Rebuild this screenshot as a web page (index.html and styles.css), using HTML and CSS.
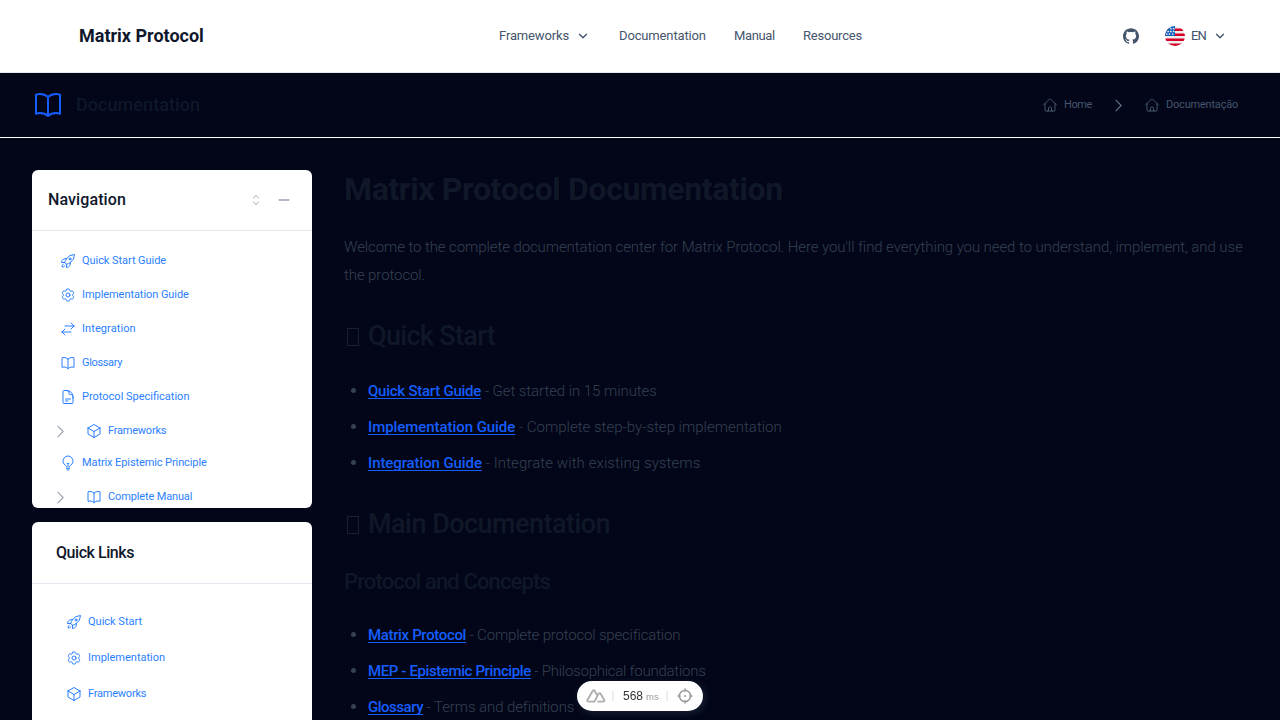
FILE: index.html
```html
<!DOCTYPE html>
<html lang="en">
<head>
<meta charset="utf-8">
<title>Matrix Protocol Documentation</title>
<link rel="stylesheet" href="styles.css">
</head>
<body>
<svg class="sprite" aria-hidden="true">
  <symbol id="book" viewBox="0 0 24 24"><path d="M12 6.042A8.967 8.967 0 0 0 6 3.75c-1.052 0-2.062.18-3 .512v14.25A8.987 8.987 0 0 1 6 18c2.305 0 4.408.867 6 2.292m0-14.25a8.966 8.966 0 0 1 6-2.292c1.052 0 2.062.18 3 .512v14.25A8.987 8.987 0 0 0 18 18a8.967 8.967 0 0 0-6 2.292m0-14.25v14.25"/></symbol>
  <symbol id="home" viewBox="0 0 24 24"><path d="m2.25 12 8.954-8.955a1.126 1.126 0 0 1 1.591 0L21.75 12M4.5 9.75v10.125c0 .621.504 1.125 1.125 1.125H9.75v-4.875c0-.621.504-1.125 1.125-1.125h2.25c.621 0 1.125.504 1.125 1.125V21h4.125c.621 0 1.125-.504 1.125-1.125V9.75M8.25 21h8.25"/></symbol>
  <symbol id="right" viewBox="0 0 24 24"><path d="m8.25 4.5 7.5 7.5-7.5 7.5"/></symbol>
  <symbol id="down" viewBox="0 0 24 24"><path d="m6 9 6 6 6-6"/></symbol>
  <symbol id="updown" viewBox="0 0 24 24"><path d="M8.25 15 12 18.75 15.75 15m-7.5-6L12 5.25 15.75 9"/></symbol>
  <symbol id="minus" viewBox="0 0 24 24"><path d="M5 12h14"/></symbol>
  <symbol id="rocket" viewBox="0 0 24 24"><path d="M15.59 14.37a6 6 0 0 1-5.84 7.38v-4.8m5.84-2.58a14.98 14.98 0 0 0 6.16-12.12A14.98 14.98 0 0 0 9.631 8.41m5.96 5.96a14.926 14.926 0 0 1-5.841 2.58m-.119-8.54a6 6 0 0 0-7.381 5.84h4.8m2.581-5.84a14.927 14.927 0 0 0-2.58 5.84m2.699 2.7c-.103.021-.207.041-.311.06a15.09 15.09 0 0 1-2.448-2.448 14.9 14.9 0 0 1 .06-.312m-2.24 2.39a4.493 4.493 0 0 0-1.757 4.306 4.493 4.493 0 0 0 4.306-1.758M16.5 9a1.5 1.5 0 1 1-3 0 1.5 1.5 0 0 1 3 0Z"/></symbol>
  <symbol id="cog" viewBox="0 0 24 24"><path d="M9.594 3.94c.09-.542.56-.94 1.11-.94h2.593c.55 0 1.02.398 1.11.94l.213 1.281c.063.374.313.686.645.87.074.04.147.083.22.127.325.196.72.257 1.075.124l1.217-.456a1.125 1.125 0 0 1 1.37.49l1.296 2.247a1.125 1.125 0 0 1-.26 1.431l-1.003.827c-.293.241-.438.613-.43.992a7.723 7.723 0 0 1 0 .255c-.008.378.137.75.43.991l1.004.827c.424.35.534.955.26 1.43l-1.298 2.247a1.125 1.125 0 0 1-1.369.491l-1.217-.456c-.355-.133-.75-.072-1.076.124a6.47 6.47 0 0 1-.22.128c-.331.183-.581.495-.644.869l-.213 1.281c-.09.543-.56.94-1.11.94h-2.594c-.55 0-1.019-.398-1.11-.94l-.213-1.281c-.062-.374-.312-.686-.644-.87a6.52 6.52 0 0 1-.22-.127c-.325-.196-.72-.257-1.076-.124l-1.217.456a1.125 1.125 0 0 1-1.369-.49l-1.297-2.247a1.125 1.125 0 0 1 .26-1.431l1.004-.827c.292-.24.437-.613.43-.991a6.932 6.932 0 0 1 0-.255c.007-.38-.138-.751-.43-.992l-1.004-.827a1.125 1.125 0 0 1-.26-1.43l1.297-2.247a1.125 1.125 0 0 1 1.37-.491l1.216.456c.356.133.751.072 1.076-.124.072-.044.146-.086.22-.128.332-.183.582-.495.644-.869l.214-1.28ZM15 12a3 3 0 1 1-6 0 3 3 0 0 1 6 0Z"/></symbol>
  <symbol id="arrows" viewBox="0 0 24 24"><path d="M7.5 21 3 16.5m0 0L7.5 12M3 16.5h13.5m0-13.5L21 7.5m0 0L16.5 12M21 7.5H7.5"/></symbol>
  <symbol id="doc" viewBox="0 0 24 24"><path d="M19.5 14.25v-2.625a3.375 3.375 0 0 0-3.375-3.375h-1.5A1.125 1.125 0 0 1 13.5 7.125v-1.5a3.375 3.375 0 0 0-3.375-3.375H8.25m0 12.75h7.5m-7.5 3H12M10.5 2.25H5.625c-.621 0-1.125.504-1.125 1.125v17.25c0 .621.504 1.125 1.125 1.125h12.75c.621 0 1.125-.504 1.125-1.125V11.25a9 9 0 0 0-9-9Z"/></symbol>
  <symbol id="cube" viewBox="0 0 24 24"><path d="m21 7.5-9-5.25L3 7.5m18 0-9 5.25m9-5.25v9l-9 5.25M3 7.5l9 5.25M3 7.5v9l9 5.25m0-9v9"/></symbol>
  <symbol id="bulb" viewBox="0 0 24 24"><path d="M12 18v-5.25m0 0a6.01 6.01 0 0 0 1.5-.189m-1.5.189a6.01 6.01 0 0 1-1.5-.189m3.75 7.478a12.06 12.06 0 0 1-4.5 0m3.75 2.383a14.406 14.406 0 0 1-3 0M14.25 18v-.192c0-.983.658-1.823 1.508-2.316a7.5 7.5 0 1 0-7.517 0c.85.493 1.509 1.333 1.509 2.316V18"/></symbol>
</svg>

<header class="topbar">
  <a class="brand">Matrix Protocol</a>
  <nav class="menu">
    <a class="menu-item w-frameworks"><span class="ls-14">Frameworks</span><svg class="icon s14 bold"><use href="#down"/></svg></a>
    <a class="menu-item w-docs ls-14">Documentation</a>
    <a class="menu-item w-manual ls-33">Manual</a>
    <a class="menu-item ls-21">Resources</a>
  </nav>
  <div class="tools">
    <svg class="github" viewBox="0 0 24 24"><path d="M12 .297c-6.63 0-12 5.373-12 12 0 5.303 3.438 9.8 8.205 11.385.6.113.82-.258.82-.577 0-.285-.01-1.04-.015-2.04-3.338.724-4.042-1.61-4.042-1.61C4.422 18.07 3.633 17.7 3.633 17.7c-1.087-.744.084-.729.084-.729 1.205.084 1.838 1.236 1.838 1.236 1.07 1.835 2.809 1.305 3.495.998.108-.776.417-1.305.76-1.605-2.665-.3-5.466-1.332-5.466-5.93 0-1.31.465-2.38 1.235-3.22-.135-.303-.54-1.523.105-3.176 0 0 1.005-.322 3.3 1.23.96-.267 1.98-.399 3-.405 1.02.006 2.04.138 3 .405 2.28-1.552 3.285-1.23 3.285-1.23.645 1.653.24 2.873.12 3.176.765.84 1.23 1.91 1.23 3.22 0 4.61-2.805 5.625-5.475 5.92.42.36.81 1.096.81 2.22 0 1.606-.015 2.896-.015 3.286 0 .315.21.69.825.57C20.565 22.092 24 17.592 24 12.297c0-6.627-5.373-12-12-12"/></svg>
    <svg class="flag" viewBox="0 0 512 512"><clipPath id="disc"><circle cx="256" cy="256" r="256"/></clipPath><g clip-path="url(#disc)"><path fill="#eee" d="M0 0h512v512H0z"/><path fill="#d80027" d="M0 64h512v64H0zM0 192h512v64H0zM0 320h512v64H0zM0 448h512v64H0z"/><path fill="#0052b4" d="M0 0h256v256H0z"/><path fill="#eee" d="M150 28l10 28h28l-22 17 8 28-24-17-24 17 8-28-22-17h28zM222 28l10 28h28l-22 17 8 28-24-17-24 17 8-28-22-17h28zM80 98l10 28h28l-22 17 8 28-24-17-24 17 8-28-22-17h28zM150 98l10 28h28l-22 17 8 28-24-17-24 17 8-28-22-17h28zM222 98l10 28h28l-22 17 8 28-24-17-24 17 8-28-22-17h28zM45 168l10 28h28l-22 17 8 28-24-17-24 17 8-28-22-17h28zM115 168l10 28h28l-22 17 8 28-24-17-24 17 8-28-22-17h28zM200 168l10 28h28l-22 17 8 28-24-17-24 17 8-28-22-17h28z"/></g></svg>
    <span class="lang">EN</span>
    <svg class="icon s14 bold"><use href="#down"/></svg>
  </div>
</header>

<div class="subbar">
  <div class="section"><svg class="icon s32"><use href="#book"/></svg><span>Documentation</span></div>
  <div class="crumbs">
    <svg class="icon s16"><use href="#home"/></svg><span class="crumb-home">Home</span>
    <svg class="icon s17 crumb-sep"><use href="#right"/></svg>
    <svg class="icon s16"><use href="#home"/></svg><span class="crumb-doc">Documentação</span>
  </div>
</div>

<div class="layout">
  <aside class="side">
    <section class="card nav-card">
      <div class="card-head"><h2>Navigation</h2><svg class="icon s16 muted"><use href="#updown"/></svg><svg class="icon s16 minus muted"><use href="#minus"/></svg></div>
      <ul class="tree">
        <li><svg class="icon s16"><use href="#rocket"/></svg><span class="ls-6">Quick Start Guide</span></li>
        <li><svg class="icon s16"><use href="#cog"/></svg><span class="ls-6">Implementation Guide</span></li>
        <li><svg class="icon s16"><use href="#arrows"/></svg><span class="wide">Integration</span></li>
        <li><svg class="icon s16"><use href="#book"/></svg><span class="ls-33">Glossary</span></li>
        <li><svg class="icon s16"><use href="#doc"/></svg><span>Protocol Specification</span></li>
        <li class="branch"><svg class="icon s17 twist"><use href="#right"/></svg><svg class="icon s16"><use href="#cube"/></svg><span class="ls-21">Frameworks</span></li>
        <li><svg class="icon s16"><use href="#bulb"/></svg><span class="ls-10">Matrix Epistemic Principle</span></li>
        <li class="branch"><svg class="icon s17 twist"><use href="#right"/></svg><svg class="icon s16"><use href="#book"/></svg><span class="ls-14">Complete Manual</span></li>
      </ul>
    </section>
    <section class="card links-card">
      <div class="card-head"><h2 class="ls-44">Quick Links</h2></div>
      <ul class="quick">
        <li><svg class="icon s16"><use href="#rocket"/></svg><span>Quick Start</span></li>
        <li><svg class="icon s16"><use href="#cog"/></svg><span>Implementation</span></li>
        <li><svg class="icon s16"><use href="#cube"/></svg><span class="ls-21">Frameworks</span></li>
      </ul>
    </section>
  </aside>

  <main class="doc">
    <h1>Matrix Protocol Documentation</h1>
    <p>Welcome to the complete documentation center for Matrix Protocol. Here you'll find everything you need to understand, implement, and use the protocol.</p>
    <h2><i class="glyph-box"></i><span class="ls-68">Quick Start</span></h2>
    <ul>
      <li><a class="ls-25">Quick Start Guide</a><span class="ls-6"> - Get started in 15 minutes</span></li>
      <li><a class="ls-6">Implementation Guide</a><span> - Complete step-by-step implementation</span></li>
      <li><a class="ls-10">Integration Guide</a><span class="wide"> - Integrate with existing systems</span></li>
    </ul>
    <h2><i class="glyph-box"></i><span class="ls-53">Main Documentation</span></h2>
    <h3>Protocol and Concepts</h3>
    <ul>
      <li><a class="ls-33">Matrix Protocol</a><span class="ls-17"> - Complete protocol specification</span></li>
      <li><a class="ls-39">MEP - Epistemic Principle</a><span class="ls-25"> - Philosophical foundations</span></li>
      <li><a class="ls-48">Glossary</a><span class="ls-10"> - Terms and definitions</span></li>
    </ul>
  </main>
</div>

<div class="devtools">
  <svg class="nuxt" viewBox="0 0 20 14"><path d="M11.3 12.6h5.9c.9 0 1.4-.9 1-1.6L14.5 4.6c-.4-.7-1.4-.7-1.8 0l-1.2 2.1M8.6 12.6H2.4c-.9 0-1.4-.9-1-1.6L6.800 1.700c.4-.7 1.400-.7 1.800 0l2.900 5-2.200 4.500c-.3.800-.6 1.400-1.500 1.400"/></svg>
  <i></i>
  <span class="time">568</span><span class="unit">ms</span>
  <i></i>
  <svg class="target" viewBox="0 0 16 16"><circle cx="8" cy="8" r="5.6"/><path d="M8 .5v3M8 12.5v3M.5 8h3M12.5 8h3"/><circle class="dot" cx="8" cy="8" r="1"/></svg>
</div>
</body>
</html>
```
FILE: styles.css
```css
* { box-sizing: border-box; }
body { margin: 0; height: 720px; overflow: hidden; background: #020618; font-family: Roboto, sans-serif; }
ul { list-style: none; margin: 0; padding: 0; }
h1, h2, h3, p { margin: 0; }
.sprite { position: absolute; width: 0; height: 0; }

.icon { flex: none; fill: none; stroke: currentColor; stroke-width: 1.5; stroke-linecap: round; stroke-linejoin: round; }
.s14 { width: 14px; height: 14px; }
.s16 { width: 16px; height: 16px; }
.s17 { width: 17px; height: 17px; }
.s32 { width: 32px; height: 32px; }
.bold { stroke-width: 2.3; }
.muted { color: #99a1af; }

.wide { letter-spacing: .09px; }
.ls-6 { letter-spacing: -.06px; }
.ls-10 { letter-spacing: -.1px; }
.ls-14 { letter-spacing: -.14px; }
.ls-17 { letter-spacing: -.18px; }
.ls-21 { letter-spacing: -.22px; }
.ls-25 { letter-spacing: -.25px; }
.ls-33 { letter-spacing: -.35px; }
.ls-39 { letter-spacing: -.39px; }
.ls-44 { letter-spacing: -.44px; }
.ls-48 { letter-spacing: -.48px; }
.ls-53 { letter-spacing: -.53px; }
.ls-68 { letter-spacing: -.68px; }

.topbar { display: grid; grid-template-columns: 467px 1fr auto; align-items: center; height: 73px; padding: 0 53px 0 32px; background: #fff; border-bottom: 1px solid #e2e8f0; }
.brand { padding: 0 0 2px 47px; font-size: 18px; font-weight: 700; color: #0f172b; }
.menu { display: flex; align-items: center; padding-bottom: 2px; font-size: 13px; color: #45556c; }
.menu-item { display: flex; align-items: center; gap: 7px; }
.menu-item .icon { margin-top: 2px; }
.w-frameworks { width: 120px; }
.w-docs { width: 115px; }
.w-manual { width: 69px; }
.tools { display: flex; align-items: center; font-size: 13px; color: #45556c; }
.github { width: 16px; height: 16px; fill: #45556c; margin-right: 26px; }
.flag { width: 20px; height: 20px; margin-right: 6px; }
.lang { width: 22px; padding-bottom: 2px; letter-spacing: -.8px; }

.subbar { display: flex; align-items: center; justify-content: space-between; height: 65px; padding: 0 42px 0 32px; border-bottom: 1px solid #fff; }
.section { display: flex; align-items: center; gap: 12px; font-size: 18px; font-weight: 500; letter-spacing: .06px; color: #0f172b; }
.section .icon { color: #155dfc; }
.section span { padding-bottom: 2px; }
.crumbs { display: flex; align-items: center; font-size: 11px; color: #45556c; }
.crumbs span { margin-left: 6px; padding-bottom: 2px; white-space: nowrap; }
.crumb-home { width: 28px; letter-spacing: -.4px; }
.crumb-doc { width: 72px; letter-spacing: -.2px; }
.crumb-sep { margin: 0 17.5px; color: #62748e; }

.layout { display: grid; grid-template-columns: 280px 904px; gap: 32px; height: 582px; padding: 32px 32px 0; overflow: hidden; }
.side { display: flex; flex-direction: column; gap: 14px; min-height: 0; }
.card { flex: none; background: #fff; border-radius: 6px; overflow: hidden; }
.nav-card { height: 338px; }
.links-card { height: 198px; border-radius: 6px 6px 0 0; }
.card-head { display: flex; align-items: center; height: 61px; padding: 0 20px 0 16px; border-bottom: 1px solid #e2e8f0; }
.card-head h2 { flex: 1; padding-bottom: 2px; font-size: 16px; font-weight: 500; color: #0f172b; }
.nav-card h2 { letter-spacing: .1px; }
.minus { margin-left: 12px; stroke-width: 2.5; }
.links-card .card-head { height: 62px; padding-left: 24px; }
.links-card h2 { padding-bottom: 0; }
.tree { padding: 13px 28px 0; font-size: 11px; color: #2b7fff; }
.tree li { display: flex; align-items: center; gap: 6px; height: 34px; }
.tree .branch { margin: 0 0 -2px -8.5px; }
.tree span, .quick span { padding-bottom: 2px; }
.twist { margin-right: 11.5px; color: #99a1af; }
.quick { padding: 20px 34px 0; font-size: 11px; color: #2b7fff; }
.quick li { display: flex; align-items: center; gap: 6px; height: 36px; }

.doc { min-height: 0; overflow: hidden; color: #364153; font-size: 15px; font-weight: 300; line-height: 28px; }
.doc h1 { height: 40px; font-size: 32px; line-height: 38px; font-weight: 700; letter-spacing: -.37px; color: #101828; }
.doc p { width: 904px; margin-top: 23px; letter-spacing: -.09px; }
.doc h2 { display: flex; align-items: center; margin: 29px 0 23px; height: 36px; font-size: 27px; font-weight: 500; color: #101828; }
.doc h3 { margin: 24px 0 23px; height: 32px; line-height: 32px; font-size: 22px; font-weight: 500; letter-spacing: -.86px; color: #101828; }
.glyph-box { flex: none; width: 12px; height: 18px; margin: 1px 9px 0 3px; border: 1px solid #182030; }
.doc li { position: relative; height: 28px; margin-bottom: 8px; padding-left: 24px; white-space: pre; }
.doc li::before { content: ""; position: absolute; left: 7px; top: 11px; width: 5px; height: 5px; border-radius: 50%; background: #364153; }
.doc a { font-weight: 500; color: #155dfc; text-decoration: underline; text-decoration-thickness: 1px; text-underline-offset: 2px; text-decoration-skip-ink: none; }

.devtools { position: fixed; left: 577px; top: 681px; display: flex; align-items: center; width: 126px; height: 30px; padding: 0 9px; border-radius: 15px; background: #fff; font-family: "Liberation Sans", sans-serif; box-shadow: 2px 2px 8px rgba(90, 100, 130, .3); }
.devtools > * { flex: none; }
.nuxt { width: 20px; height: 14px; fill: none; stroke: #afafaf; stroke-width: 1.9; stroke-linejoin: round; }
.devtools i { width: 2px; height: 10px; margin: 0 8px 0 6px; background: #ededed; }
.time { width: 21px; margin-left: 1px; font-size: 12px; color: #333; }
.unit { width: 14px; margin-left: 2px; font-size: 9.5px; color: #999; }
.target { width: 16px; height: 16px; margin-left: 1px; fill: none; stroke: #999; stroke-width: 1.5; }
.target .dot { fill: #999; stroke: none; }
```
